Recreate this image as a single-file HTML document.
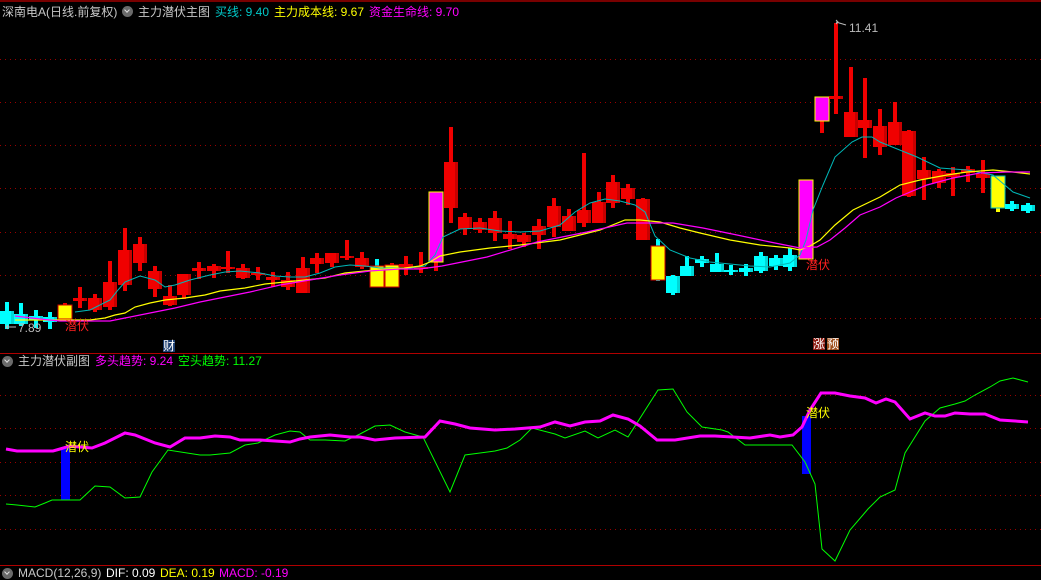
<!DOCTYPE html>
<html><head><meta charset="utf-8">
<style>
html,body{margin:0;padding:0;background:#000;}
body{width:1041px;height:580px;overflow:hidden;position:relative;font-family:"Liberation Sans","Noto Sans CJK SC",sans-serif;font-size:12px;}
.t{position:absolute;white-space:nowrap;line-height:14px;}
.ic{position:absolute;width:11px;height:11px;border-radius:50%;background:#6a6a6a;}
.ic:after{content:"";position:absolute;left:3px;top:2px;width:3px;height:3px;border-right:1.5px solid #ddd;border-bottom:1.5px solid #ddd;transform:rotate(45deg);}
</style></head><body>
<svg id="s" width="1041" height="580" style="position:absolute;left:0;top:0">
<line x1="0" y1="1" x2="1041" y2="1" stroke="#a00000" stroke-width="1.5"/>
<line x1="0" y1="353.5" x2="1041" y2="353.5" stroke="#b00000"/>
<line x1="0" y1="565.5" x2="1041" y2="565.5" stroke="#b00000"/>
<g id="grid" stroke="#9a0000" stroke-dasharray="1,4"></g>
<g id="lines2"></g>
<g id="candles"></g>
<g id="lines" fill="none"></g>
<rect x="61" y="447" width="9" height="53" fill="#0000ff"/>
<rect x="802" y="416" width="9" height="58" fill="#0000ff"/>
<g id="sub" fill="none"></g>
<rect x="163" y="340" width="12" height="12" fill="#1c3e70"/>
<rect x="813" y="338" width="12" height="12" fill="#8a1a10"/>
<rect x="827" y="338" width="12" height="12" fill="#a0501c"/>
<polyline points="836,24 838,22 836,20" fill="none" stroke="#bbb"/>
<line x1="836" y1="22" x2="846" y2="25" stroke="#bbb"/>
<polyline points="8,325 6,327 8,329" fill="none" stroke="#bbb"/>
<line x1="6" y1="327" x2="16" y2="327" stroke="#bbb"/>
</svg>
<div class="t" style="left:2px;top:5px;color:#c8c8c8">深南电A(日线.前复权)</div>
<div class="ic" style="left:122px;top:6px"></div>
<div class="t" style="left:138px;top:5px;color:#c8c8c8">主力潜伏主图</div>
<div class="t" style="left:215px;top:5px;color:#00c8c8">买线: 9.40</div>
<div class="t" style="left:274px;top:5px;color:#ffff00">主力成本线: 9.67</div>
<div class="t" style="left:369px;top:5px;color:#ff00ff">资金生命线: 9.70</div>
<div class="t" style="left:849px;top:21px;color:#bbb">11.41</div>
<div class="t" style="left:18px;top:321px;color:#bbb">7.89</div>
<div class="t" style="left:65px;top:319px;color:#ff2020">潜伏</div>
<div class="t" style="left:806px;top:258px;color:#ff2020">潜伏</div>
<div class="t" style="left:163px;top:339px;color:#fff">财</div>
<div class="t" style="left:813px;top:337px;color:#fff">涨</div>
<div class="t" style="left:827px;top:337px;color:#fff">预</div>
<div class="ic" style="left:2px;top:356px"></div>
<div class="t" style="left:18px;top:354px;color:#c8c8c8">主力潜伏副图</div>
<div class="t" style="left:95px;top:354px;color:#ff00ff">多头趋势: 9.24</div>
<div class="t" style="left:178px;top:354px;color:#00ff00">空头趋势: 11.27</div>
<div class="t" style="left:65px;top:440px;color:#ffff00">潜伏</div>
<div class="t" style="left:806px;top:406px;color:#ffff00">潜伏</div>
<div class="ic" style="left:2px;top:568px"></div>
<div class="t" style="left:18px;top:566px;color:#c8c8c8">MACD(12,26,9)</div>
<div class="t" style="left:106px;top:566px;color:#fff">DIF: 0.09</div>
<div class="t" style="left:160px;top:566px;color:#ffff00">DEA: 0.19</div>
<div class="t" style="left:219px;top:566px;color:#ff00ff">MACD: -0.19</div>
<script>
var NS="http://www.w3.org/2000/svg";
function el(p,n,a){var e=document.createElementNS(NS,n);for(var k in a)e.setAttribute(k,a[k]);document.getElementById(p).appendChild(e);return e;}
[59,102,145,188,232,275,318,395,428,462,495,529].forEach(function(y){el("grid","line",{x1:0,y1:y+.5,x2:1041,y2:y+.5});});
var C=[[7,302,311,324,329,'c'],[21,303,314,324,326,'c'],[36,310,316,320,328,'c'],[50,312,317,322,329,'c'],[65,303,305,319,320,'y'],
[80,287,298,301,308,'r'],[95,294,298,310,312,'r'],[110,261,282,307,310,'r'],[125,228,250,285,291,'r'],[140,237,244,263,271,'r'],
[155,266,271,289,297,'r'],[170,285,296,305,306,'r'],[184,274,274,295,299,'r'],[199,262,268,271,279,'r'],[214,264,266,271,278,'r'],
[228,251,267,268,273,'r'],[243,264,268,278,279,'r'],[258,267,273,275,280,'r'],[273,272,277,280,287,'r'],[288,272,280,287,290,'r'],
[303,257,268,293,293,'r'],[317,253,258,264,273,'r'],[332,253,253,263,267,'r'],[347,240,256,258,260,'r'],[362,252,258,267,269,'r'],
[377,259,266,287,287,'y'],[392,263,265,287,287,'y'],[406,256,264,267,275,'r'],[421,252,267,269,273,'r'],[436,192,192,262,271,'m'],
[451,127,162,208,223,'r'],[465,213,217,229,235,'r'],[480,218,222,230,233,'r'],[495,211,218,233,241,'r'],[510,221,234,239,249,'r'],
[524,233,235,242,247,'r'],[539,219,226,235,249,'r'],[554,198,206,227,237,'r'],[569,209,216,231,231,'r'],[584,153,210,223,227,'r'],
[599,192,202,223,223,'r'],[613,175,182,203,208,'r'],[628,184,188,199,205,'r'],[643,198,199,240,240,'r'],[658,239,246,280,281,'y'],
[673,275,276,293,295,'c'],[687,256,266,276,276,'c'],[702,256,259,263,267,'c'],[717,253,264,272,272,'c'],[731,265,270,272,275,'c'],
[746,264,268,272,276,'c'],[761,252,256,271,273,'c'],[776,255,258,266,270,'c'],[790,248,255,267,271,'c'],[806,180,180,259,259,'m'],
[822,97,97,121,133,'m'],[836,23,96,99,114,'r'],[851,67,112,137,137,'r'],[865,78,120,128,158,'r'],[880,109,126,147,155,'r'],
[895,102,122,145,145,'r'],[909,130,131,196,197,'r'],[924,157,170,179,200,'r'],[939,169,171,183,188,'r'],[953,167,173,177,196,'r'],
[968,166,169,173,182,'r'],[983,160,174,178,193,'r'],[998,176,176,208,212,'y'],[1012,201,204,209,211,'c'],[1028,203,205,211,213,'c']];
var col={c:'#00ffff',r:'#f00000',y:'#ffff00',m:'#ff00ff'};
C.forEach(function(c){var x=c[0],f=col[c[5]];
 var wf=(c[5]=='y'&&c[0]!=998)?'#00ffff':(c[5]=='m'?'#f00000':f); if(c[5]=='y'&&(x==65||x==392))wf='#f00000';
 el("candles","rect",{x:x-2,y:c[1],width:4,height:Math.max(1,c[4]-c[1]),fill:wf});
 var b=el("candles","rect",{x:x-7,y:c[2],width:14,height:Math.max(2,c[3]-c[2]),fill:f});
 if(c[5]=='r')el("candles","rect",{x:x+4,y:c[2],width:3,height:Math.max(2,c[3]-c[2]),fill:'#c80000'});
 if(c[5]=='c')el("candles","rect",{x:x+4,y:c[2],width:3,height:Math.max(2,c[3]-c[2]),fill:'#00d8d8'});
 if(c[5]=='y'){b.setAttribute('stroke',x==998?'#00c0c0':'#d00000');b.setAttribute('stroke-width','1');}
 if(c[5]=='m'){b.setAttribute('stroke','#ffff00');b.setAttribute('stroke-width','1');}
});
function pl(g,pts,c,w){el(g,"polyline",{points:pts,stroke:c,"stroke-width":w,fill:"none"});}
pl("lines","75,312 90,310 110,300 118,290 125,282 140,276 155,280 165,287 175,285 190,280 210,275 225,272 240,271 260,273 275,276 290,277 305,277 320,273 335,267 350,265 365,266 380,268 395,268 410,268 425,266 435,255 443,237 460,229 480,228 500,231 520,232 540,231 560,225 575,212 590,203 605,199 620,201 635,205 645,212 655,236 670,250 690,258 710,262 730,264 750,266 770,267 790,263 800,255 806,240 813,210 823,185 835,157 852,142 862,137 872,137 880,142 917,157 940,168 967,170 993,175 1013,192 1030,198","#00b8b8",1);
pl("lines","15,320 60,320 90,320 105,318 115,315 125,313 135,307 150,303 165,300 185,298 205,295 220,291 245,288 265,284 285,282 305,280 325,278 345,273 365,271 385,269 405,268 420,266 430,262 440,256 460,252 490,248 520,245 560,240 600,230 625,220 640,220 660,222 680,228 700,233 730,240 760,245 790,248 800,250 810,246 820,240 835,225 853,210 880,197 900,185 920,180 947,175 967,172 993,170 1013,172 1030,174","#ffff00",1.2);
pl("lines","15,316 40,319 60,321 110,321 125,318 150,313 175,308 200,302 225,297 250,292 280,285 310,280 340,275 370,271 400,269 420,269 442,266 487,257 537,242 587,232 627,223 650,223 673,223 703,228 737,235 770,242 800,248 817,247 830,240 845,228 860,215 880,207 896,198 927,185 953,178 980,173 1007,172 1030,172","#ff00ff",1.2);
pl("sub","6,504 17,505 35,507 45,503 52,500 80,500 95,486 110,487 125,498 140,497 152,472 168,450 200,455 210,455 230,453 245,445 258,443 275,435 290,431 300,432 310,440 325,440 345,441 360,434 375,426 390,425 405,432 423,437 450,492 465,455 480,453 495,451 507,448 520,440 532,428 555,434 565,438 585,431 598,438 615,430 628,437 658,390 673,389 687,412 702,427 722,430 728,432 745,445 765,445 792,445 805,462 815,484 822,549 835,561 850,530 868,509 880,497 895,490 905,453 915,437 925,421 940,408 955,404 965,401 975,395 990,387 1000,381 1013,378 1028,382","#00ff00",1);
pl("sub","6,449 17,451 53,451 60,449 70,446 80,447 92,448 105,443 125,433 135,435 155,443 170,447 185,438 200,438 215,436 230,437 240,440 260,440 275,441 290,442 300,439 310,437 330,435 350,437 360,437 375,440 395,438 425,437 440,421 455,424 470,428 495,430 515,429 540,427 555,422 570,426 585,422 600,421 613,415 628,419 640,426 657,440 675,440 700,436 715,436 750,438 770,435 780,437 793,435 802,427 810,410 821,393 835,393 850,396 865,398 876,403 886,399 895,402 910,419 925,413 935,416 945,416 955,413 970,414 985,414 1000,420 1015,421 1028,422","#ff00ff",3);
</script>
</body></html>
